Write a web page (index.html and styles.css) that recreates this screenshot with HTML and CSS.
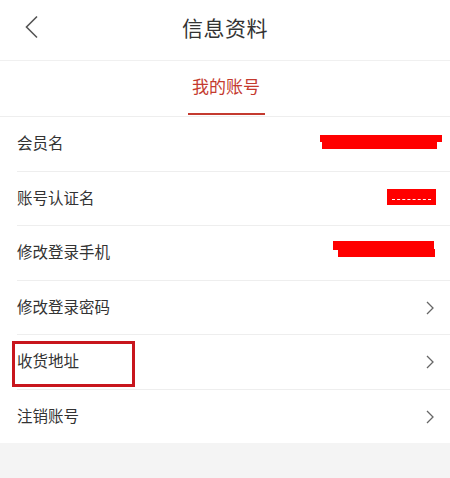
FILE: index.html
```html
<!DOCTYPE html>
<html lang="zh-CN">
<head>
<meta charset="utf-8">
<title>信息资料</title>
<link rel="stylesheet" href="styles.css">
</head>
<body>
<div class="page">
  <header class="topbar">
    <span class="back">
      <svg width="14" height="24" viewBox="0 0 14 24"><path d="M12 1.5 L1.5 12 L12 22.5" fill="none" stroke="#555" stroke-width="1.6"/></svg>
    </span>
    <h1 class="title">信息资料</h1>
  </header>
  <nav class="tabs">
    <span class="tab active">我的账号</span>
  </nav>
  <ul class="list">
    <li class="row"><span class="label">会员名</span></li>
    <li class="row"><span class="label">账号认证名</span></li>
    <li class="row"><span class="label">修改登录手机</span></li>
    <li class="row"><span class="label">修改登录密码</span><span class="arrow"><svg width="8" height="14" viewBox="0 0 8 14"><path d="M1 1 L7 7 L1 13" fill="none" stroke="#666" stroke-width="1.3"/></svg></span></li>
    <li class="row"><span class="label">收货地址</span><span class="arrow"><svg width="8" height="14" viewBox="0 0 8 14"><path d="M1 1 L7 7 L1 13" fill="none" stroke="#666" stroke-width="1.3"/></svg></span></li>
    <li class="row"><span class="label">注销账号</span><span class="arrow"><svg width="8" height="14" viewBox="0 0 8 14"><path d="M1 1 L7 7 L1 13" fill="none" stroke="#666" stroke-width="1.3"/></svg></span></li>
  </ul>

  <div class="redact r1a"></div>
  <div class="redact r1b"></div>
  <div class="redact r2"><span class="dash"></span></div>
  <div class="redact r3a"></div>
  <div class="redact r3b"></div>
  <div class="mark"></div>
</div>
</body>
</html>
```

FILE: styles.css
```css
html, body {
  margin: 0;
  padding: 0;
  background: #f4f4f4;
  font-family: "Noto Sans CJK SC", "Noto Sans", sans-serif;
}
.page {
  position: relative;
  width: 450px;
  height: 478px;
  background: #f4f4f4;
}
.topbar {
  height: 60px;
  background: #fff;
  border-bottom: 1px solid #f0f0f0;
  display: flex;
  align-items: center;
  justify-content: center;
  position: relative;
}
.back {
  position: absolute;
  left: 25px;
  top: 15px;
  display: flex;
}
.title {
  margin: 0;
  font-size: 21px;
  font-weight: normal;
  color: #333;
  letter-spacing: 0.5px;
  padding-bottom: 6px;
}
.tabs {
  height: 55px;
  background: #fff;
  border-bottom: 1px solid #eeeeee;
  display: flex;
  justify-content: center;
}
.tab {
  display: flex;
  align-items: center;
  justify-content: center;
  width: 77px;
  font-size: 17px;
  color: #c43a2f;
  box-sizing: border-box;
  padding-bottom: 2px;
  margin-left: 2px;
}
.tab.active {
  border-bottom: 2.5px solid #c43a2f;
  height: 53.5px;
}
.list {
  list-style: none;
  margin: 0;
  padding: 0 0 0 17px;
  background: #fff;
}
.row {
  height: 53.5px;
  border-bottom: 1px solid #eeeeee;
  display: flex;
  align-items: center;
  justify-content: space-between;
  padding-right: 16px;
}
.row:last-child {
  border-bottom: none;
}
.label {
  font-size: 15.5px;
  color: #333;
  padding-bottom: 3px;
}
.arrow {
  display: flex;
  margin-top: 1px;
}
.redact {
  position: absolute;
  background: #ff0000;
}
.r1a { left: 320px; top: 135px; width: 122px; height: 7px; }
.r1b { left: 322px; top: 141px; width: 115px; height: 8px; }
.r2 { left: 387px; top: 189px; width: 49px; height: 16px; }
.r2 .dash {
  position: absolute;
  left: 5px;
  top: 10px;
  width: 39px;
  border-top: 1px dashed #fff;
}
.r3a { left: 333px; top: 241px; width: 101px; height: 9px; }
.r3b { left: 338px; top: 249px; width: 97px; height: 8px; }
.mark {
  position: absolute;
  left: 12px;
  top: 341px;
  width: 123px;
  height: 46px;
  box-sizing: border-box;
  border: 3px solid #c8161d;
}
```
